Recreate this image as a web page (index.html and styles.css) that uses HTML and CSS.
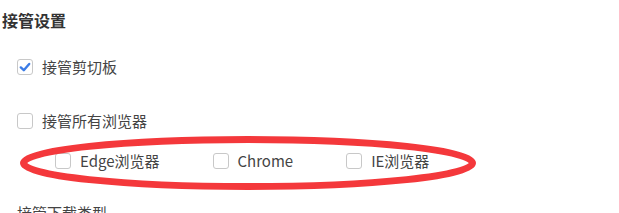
FILE: index.html
```
<!DOCTYPE html>
<html>
<head>
    <meta charset="utf-8">
    <title>接管设置</title>
    <link rel="stylesheet" href="styles.css">
</head>
<body>
    <div class="page">
        <h3 class="title">接管设置</h3>

        <label class="option first">
            <span class="box checked">
                <svg width="16" height="16" viewBox="0 0 16 16"><path d="M3.8 8.4 L6.8 11.2 L12.2 5" fill="none" stroke="#3b7ce6" stroke-width="2.4" stroke-linecap="round" stroke-linejoin="round"/></svg>
            </span>
            <span class="text">接管剪切板</span>
        </label>

        <label class="option second">
            <span class="box"></span>
            <span class="text">接管所有浏览器</span>
        </label>

        <div class="browsers">
            <label class="option">
                <span class="box"></span>
                <span class="text">Edge浏览器</span>
            </label>
            <label class="option">
                <span class="box"></span>
                <span class="text">Chrome</span>
            </label>
            <label class="option">
                <span class="box"></span>
                <span class="text">IE浏览器</span>
            </label>
        </div>

        <div class="section">接管下载类型</div>

        <!-- red hand marking round the browser row -->
        <svg class="mark" width="462" height="62" viewBox="0 0 462 62">
            <ellipse cx="230" cy="30" rx="224.5" ry="23.5" fill="none" stroke="#f4383b" stroke-width="7"/>
        </svg>
    </div>
</body>
</html>
```

FILE: styles.css
```
body {
    margin: 0;
    background: #fff;
    font-family: "Noto Sans CJK SC", "Microsoft YaHei", sans-serif;
    color: #444;
}
.page {
    position: relative;
    width: 619px;
    height: 213px;
    overflow: hidden;
}
.title {
    margin: 8px 0 0 2px;
    font-size: 16px;
    line-height: 24px;
    font-weight: 600;
    color: #333;
}
.option {
    display: flex;
    align-items: center;
    height: 20px;
    font-size: 15px;
    cursor: pointer;
}
.option.first {
    margin: 25px 0 0 17px;
}
.option.second {
    margin: 34px 0 0 17px;
}
.box {
    width: 14px;
    height: 14px;
    border: 1px solid #c8c8c8;
    border-radius: 3px;
    background: #fff;
    position: relative;
    flex: none;
}
.box svg {
    position: absolute;
    left: -1px;
    top: -1px;
}
.text {
    margin-left: 9px;
    line-height: 20px;
}
.browsers {
    display: flex;
    margin: 20px 0 0 55px;
}
.browsers .option {
    margin-right: 53px;
}
.section {
    margin: 32px 0 0 17px;
    font-size: 15px;
    line-height: 20px;
    color: #444;
}
.mark {
    position: absolute;
    left: 18px;
    top: 133px;
}
```
